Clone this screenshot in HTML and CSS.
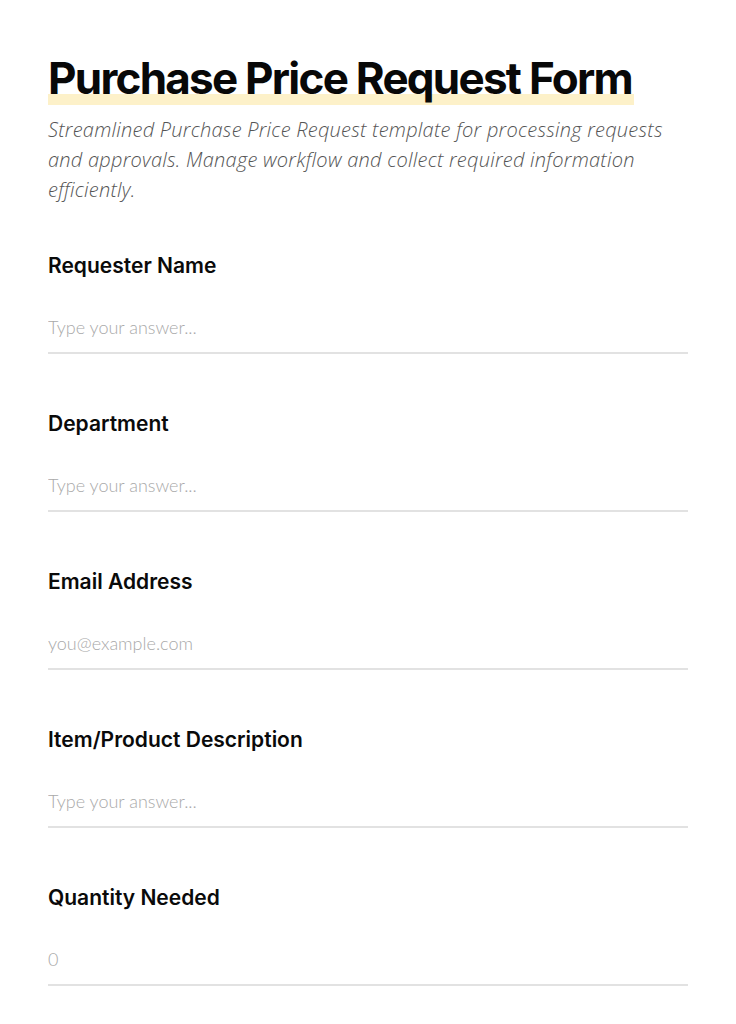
FILE: index.html
```html
<!DOCTYPE html>
<html lang="en">
<head>
<meta charset="utf-8">
<title>Purchase Price Request Form</title>
<link rel="stylesheet" href="styles.css">
</head>
<body>
<main class="page">
  <header class="intro">
    <h1 class="title"><span class="title-mark">Purchase Price Request Form</span></h1>
    <p class="lead">Streamlined Purchase Price Request template for processing requests and approvals. Manage workflow and collect required information efficiently.</p>
  </header>
  <form class="form">
    <div class="field">
      <label class="label" for="f1">Requester Name</label>
      <input class="input" id="f1" type="text" placeholder="Type your answer...">
    </div>
    <div class="field">
      <label class="label" for="f2">Department</label>
      <input class="input" id="f2" type="text" placeholder="Type your answer...">
    </div>
    <div class="field">
      <label class="label" for="f3">Email Address</label>
      <input class="input" id="f3" type="email" placeholder="you@example.com">
    </div>
    <div class="field">
      <label class="label" for="f4">Item/Product Description</label>
      <input class="input" id="f4" type="text" placeholder="Type your answer...">
    </div>
    <div class="field">
      <label class="label" for="f5">Quantity Needed</label>
      <input class="input" id="f5" type="text" placeholder="0">
    </div>
  </form>
</main>
</body>
</html>
```
FILE: styles.css
```css
* { box-sizing: border-box; }
html, body { margin: 0; padding: 0; background: #ffffff; }
body { font-family: Inter, "Noto Sans", sans-serif; color: #0a0a0a; }

.page { padding: 50px 48px 0 48px; }

.title {
  margin: 0;
  font-size: 44px;
  line-height: 56px;
  font-weight: 700;
  letter-spacing: -1.75px;
  color: #080808;
}
.title-mark {
  background: linear-gradient(to bottom, transparent 79%, #fdf1c9 79%);
  padding-right: 2px;
}

.lead {
  margin: 9px 0 0 0;
  font-family: "Open Sans", Lato, sans-serif;
  font-style: italic;
  font-weight: 300;
  font-size: 20px;
  line-height: 30px;
  letter-spacing: 0.25px;
  color: #555555;
  max-width: 632px;
}

.form { display: flex; flex-direction: column; gap: 56px; margin-top: 47px; }
.field { display: flex; flex-direction: column; gap: 30px; }
.label {
  font-size: 21px;
  line-height: 28px;
  font-weight: 600;
  letter-spacing: 0;
  color: #0a0a0a;
}
.input {
  width: 100%;
  border: 0;
  border-bottom: 2px solid #e2e2e2;
  padding: 5px 0 13px 0;
  font-family: Lato, sans-serif;
  font-weight: 300;
  font-size: 18px;
  line-height: 24px;
  height: 44px;
  color: #222;
  background: transparent;
  outline: none;
}
.input::placeholder { color: #a9a9a9; opacity: 1; }
```
